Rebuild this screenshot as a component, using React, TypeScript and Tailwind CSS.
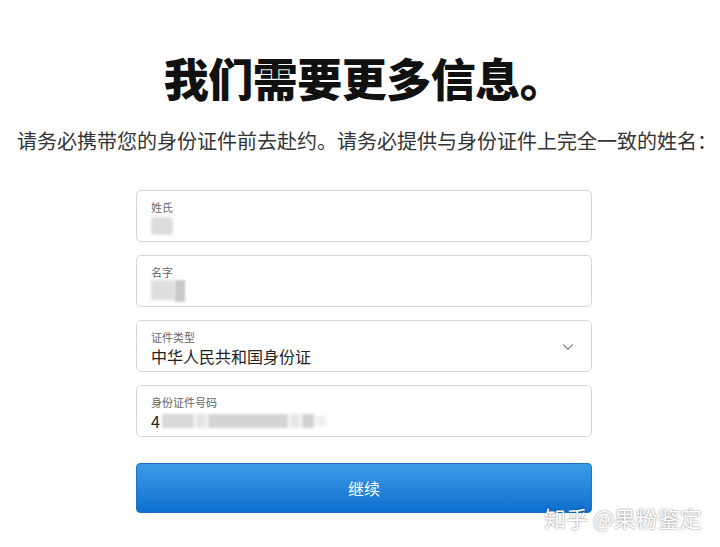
import { ChevronDown } from "lucide-react";

const font = { fontFamily: '"Noto Sans CJK SC", "Noto Sans", sans-serif' };

function Field({ label, children }: { label: string; children?: React.ReactNode }) {
    return (
        <div className="relative h-[52px] w-full rounded-[5px] border border-[#d6d6d6] bg-white px-[14px] pt-[8px]">
            <div className="text-[11px] leading-[16px] text-[#666]">{label}</div>
            <div className="flex h-[22px] items-center text-[16px] text-[#222]">{children}</div>
        </div>
    );
}

export default function App() {
    return (
        <div className="h-[547px] w-[720px] overflow-hidden bg-white" style={font}>
            <h1 className="pt-[50px] text-center text-[45px] font-black leading-[56px] tracking-[-0.5px] text-[#111] pl-[8px]">
                我们需要更多信息。
            </h1>
            <p className="mt-[22px] text-center text-[20px] leading-[26px] text-[#333] pl-[14px]">
                请务必携带您的身份证件前去赴约。请务必提供与身份证件上完全一致的姓名：
            </p>

            <div className="ml-[136px] mt-[36px] flex w-[456px] flex-col gap-[13px]">
                <Field label="姓氏">
                    <div className="h-[18px] w-[22px] rounded-[3px] bg-[#dcdcdc] blur-[1.5px]" />
                </Field>
                <Field label="名字">
                    <div className="flex">
                        <div className="h-[20px] w-[24px] bg-[#dedede] blur-[1.5px]" />
                        <div className="h-[22px] w-[10px] bg-[#c9c9c9] blur-[1px]" />
                    </div>
                </Field>
                <Field label="证件类型">
                    <span>中华人民共和国身份证</span>
                    <ChevronDown className="absolute right-[14px] top-[17px] h-[18px] w-[18px] text-[#888]" strokeWidth={1.5} />
                </Field>
                <Field label="身份证件号码">
                    <span className="mr-[2px]">4</span>
                    <div className="flex items-center gap-[2px] blur-[1.5px]">
                        <div className="h-[14px] w-[32px] bg-[#d8d8d8]" />
                        <div className="h-[14px] w-[10px] bg-[#e4e4e4]" />
                        <div className="h-[14px] w-[80px] bg-[#d4d4d4]" />
                        <div className="h-[14px] w-[10px] bg-[#e6e6e6]" />
                        <div className="h-[14px] w-[12px] bg-[#d0d0d0]" />
                        <div className="h-[10px] w-[10px] bg-[#eeeeee]" />
                    </div>
                </Field>

                <div className="relative mt-[13px]">
                    <button className="h-[50px] w-full rounded-[4px] border border-[#1a73c8] bg-gradient-to-b from-[#3c9ce6] to-[#0b6fcf] text-[16px] text-white">
                        继续
                    </button>
                    <div className="absolute left-[408px] top-[39px] whitespace-nowrap text-[22px] leading-[30px] text-white [text-shadow:0_0_2px_rgba(0,0,0,0.6)]">
                        知乎 @果粉鉴定
                    </div>
                </div>
            </div>
        </div>
    );
}
